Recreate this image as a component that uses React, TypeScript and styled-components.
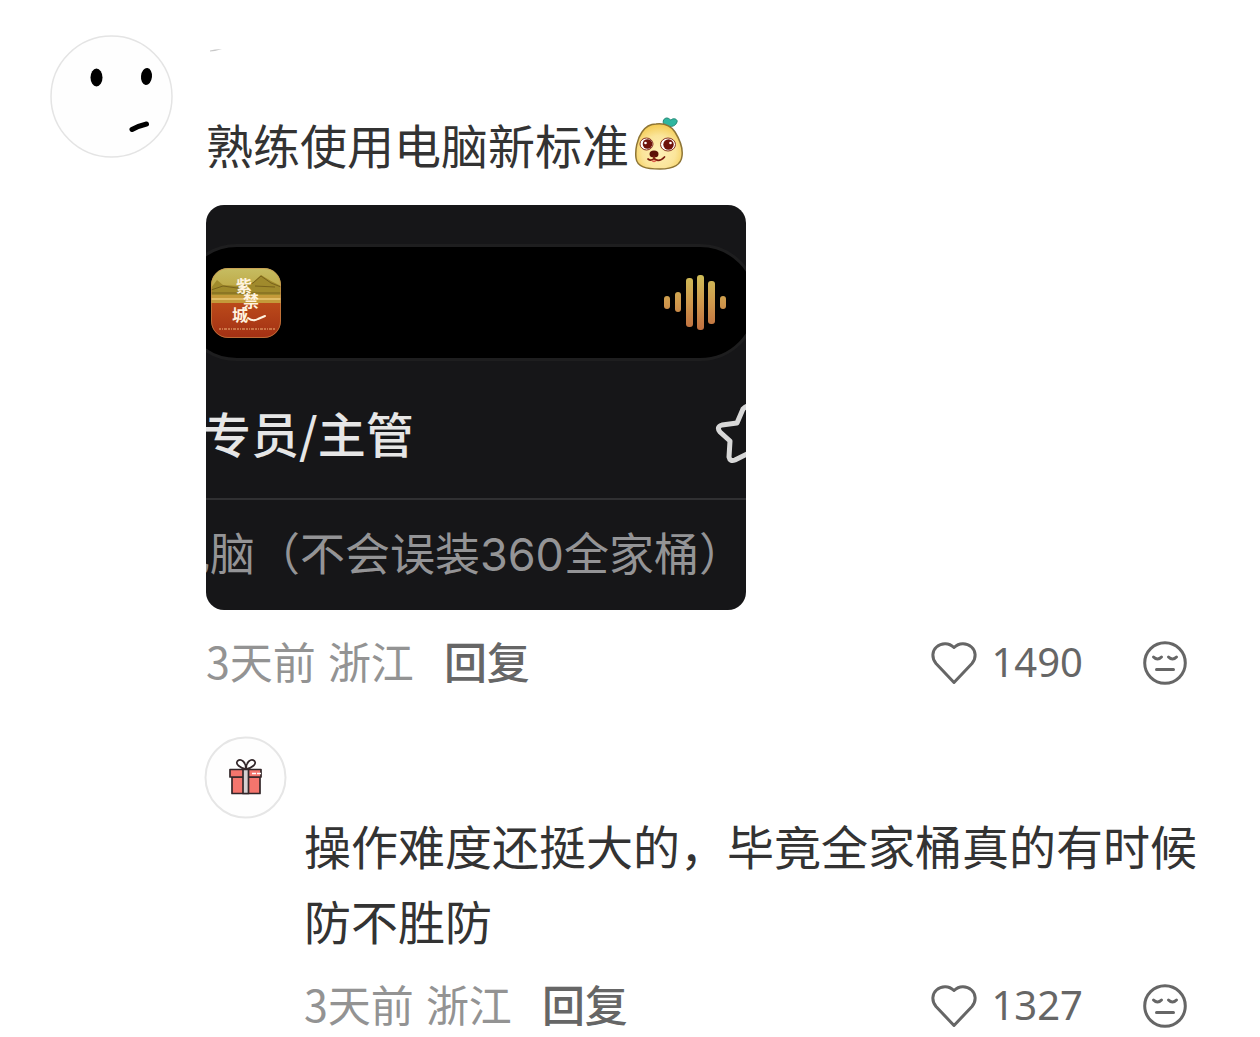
import React from 'react';
import styled, { createGlobalStyle } from 'styled-components';

const GlobalStyle = createGlobalStyle`
  *, *::before, *::after { box-sizing: border-box; }
  body {
    margin: 0;
    background: #fff;
    color: #333;
    font-family: "Noto Sans CJK SC", "Noto Sans", sans-serif;
  }
  p, figure { margin: 0; }
  svg { display: block; flex: none; }
`;

const Page = styled.main`
  padding: 35px 60px 0 50px;
`;

const Comment = styled.article<{ $gap: number }>`
  display: flex;
  align-items: flex-start;
  gap: ${(p) => p.$gap}px;
`;

const Body = styled.div`
  flex: 1;
  min-width: 0;
`;

const NameLine = styled.div`
  height: 71px;
  padding: 13px 4px;
`;

const Message = styled.p`
  font-size: 47px;
  line-height: 75px;
`;

const Sticker = styled.svg`
  display: inline-block;
  vertical-align: -7px;
  margin-left: 5px;
`;

const MetaRow = styled.footer<{ $space: number }>`
  display: flex;
  align-items: center;
  height: 60px;
  margin-top: ${(p) => p.$space}px;
  padding-right: 13px;
  font-size: 43px;
  line-height: 54px;
`;

const When = styled.div`
  display: flex;
  gap: 12px;
  padding-bottom: 6px;
  color: #939393;
`;

const PlainButton = styled.button`
  display: flex;
  align-items: center;
  padding: 0;
  border: 0;
  background: none;
  color: #666;
  font: inherit;
  cursor: pointer;
`;

const ReplyButton = styled(PlainButton)`
  margin-left: 30px;
  margin-right: auto;
  padding-bottom: 6px;
  font-weight: 500;
`;

const LikeButton = styled(PlainButton)`
  gap: 14px;
  margin-right: 60px;
`;

const Count = styled.span`
  padding-bottom: 2px;
  font-family: "Noto Sans", sans-serif;
  font-size: 40px;
`;

const Photo = styled.figure`
  width: 540px;
  max-width: 100%;
  margin-top: 24px;
  padding-top: 39px;
  border-radius: 18px;
  overflow: hidden;
  background: #161618;
`;

const Island = styled.div`
  display: flex;
  align-items: center;
  justify-content: space-between;
  height: 117px;
  margin: 0 -12px 0 -27px;
  padding: 0 28px 0 29px;
  border: 3px solid #1e1e1f;
  border-radius: 58px;
  background: #000;
`;

const JobTitle = styled.div`
  display: flex;
  align-items: center;
  justify-content: space-between;
  height: 139px;
  margin: 0 -37px 0 -3px;
  padding-top: 8px;
  border-bottom: 2px solid #303032;
  color: #e6e6e6;
  font-size: 48px;
  font-weight: 500;
  line-height: 72px;
`;

const JobName = styled.span`
  padding-bottom: 4px;
`;

const JobDetail = styled.div`
  display: flex;
  justify-content: flex-end;
  height: 110px;
  padding: 19px 2px 0 0;
  color: #949496;
  font-family: Inter, "Noto Sans CJK SC", sans-serif;
  font-size: 45px;
  line-height: 72px;
  white-space: nowrap;
`;

const Replies = styled.section`
  margin-top: 43px;
  margin-left: -2px;
`;

const ReplyBody = styled(Body)`
  padding-top: 71px;
`;

const FaceAvatar = () => (
  <svg width="123" height="123" viewBox="0 0 123 123" role="img" aria-label="头像">
    <circle cx="61.500" cy="61.500" r="60.500" fill="#fefefe" stroke="#e4e4e4" strokeWidth="1.500" />
    <ellipse cx="46.500" cy="42.500" rx="6" ry="9" fill="#000" />
    <ellipse cx="96.500" cy="41.500" rx="5.500" ry="8.500" fill="#000" transform="rotate(6 96.500 41.500)" />
    <path d="M82 94.500 Q88 91 96.500 89" fill="none" stroke="#000" strokeWidth="5" strokeLinecap="round" />
  </svg>
);

const GiftAvatar = () => (
  <svg width="83" height="83" viewBox="0 0 83 83" role="img" aria-label="头像">
    <circle cx="41.500" cy="41.500" r="40" fill="#fefefe" stroke="#e6e6e6" strokeWidth="2" />
    <g stroke="#33272a" strokeWidth="1.700" strokeLinejoin="round">
      <path d="M28 41 H56 V57.500 H28 Z" fill="#f4756d" />
      <path d="M26 33.500 H57 V41 H26 Z" fill="#f4756d" />
      <path d="M39 33.500 H44.500 V57.500 H39 Z" fill="#d6d1d1" />
      <path d="M42 33 C36 32 31 28 33.500 25 C37 22 42 26 42 33 C42 26 47 22 50.500 25 C53 28 48 32 42 33 Z" fill="#fff" />
    </g>
    <path d="M48 37.500 H58" stroke="#fff" strokeWidth="1.500" strokeDasharray="4 1" />
  </svg>
);

const DogSticker = () => (
  <Sticker width="50" height="54" viewBox="0 0 50 54" role="img" aria-label="表情">
    <defs>
      <radialGradient id="fur" cx="50%" cy="62%" r="60%">
        <stop offset="0" stopColor="#fff0b8" />
        <stop offset="0.6" stopColor="#fbe59a" />
        <stop offset="1" stopColor="#f4cc55" />
      </radialGradient>
    </defs>
    <path d="M30 8 C28 4 30 1 33 1 C35 1 36 3 37 3 C40 0 45 3 42.500 6 C41 10 35 10 31 9 Z" fill="#2fb6a0" stroke="#248874" strokeWidth="1" />
    <path d="M22 7 C30 6 37 9 41 15 C46 23 49 32 48 39 C47 49 38 52 26 52 C12 52 3 50 2 41 C1 33 3 22 8 15 C12 9 17 7 22 7 Z" fill="url(#fur)" stroke="#8e7536" strokeWidth="1.500" />
    <ellipse cx="12.500" cy="27" rx="6.500" ry="6" fill="#fff" stroke="#8a3522" strokeWidth="1" />
    <ellipse cx="34" cy="27.500" rx="7.500" ry="6.500" fill="#fff" stroke="#8a3522" strokeWidth="1" />
    <circle cx="13.500" cy="27" r="4.800" fill="#6e120b" />
    <circle cx="34.500" cy="27.500" r="5.200" fill="#6e120b" />
    <circle cx="11.500" cy="26" r="1.300" fill="#fff" />
    <circle cx="36.500" cy="26" r="1.300" fill="#fff" />
    <ellipse cx="20" cy="37" rx="4.500" ry="3.500" fill="#5b1008" />
    <path d="M14 42 Q17 44.500 20 41.500 V39 M20 41.500 Q25 46 30.500 40" fill="none" stroke="#7c1c10" strokeWidth="1.700" strokeLinecap="round" />
    <path d="M17 43.500 Q20 47 23 43.500 Z" fill="#dd5a4a" />
  </Sticker>
);

const PalaceIcon = () => (
  <svg width="70" height="70" viewBox="0 0 70 70" role="img" aria-label="紫禁城">
    <defs>
      <clipPath id="tile"><rect width="70" height="70" rx="17" /></clipPath>
      <linearGradient id="sky" x1="0" y1="0" x2="0" y2="1">
        <stop offset="0" stopColor="#c6bd62" />
        <stop offset="1" stopColor="#b99a32" />
      </linearGradient>
      <linearGradient id="wall" x1="0" y1="0" x2="0" y2="1">
        <stop offset="0" stopColor="#bb4a1a" />
        <stop offset="1" stopColor="#a23014" />
      </linearGradient>
    </defs>
    <g clipPath="url(#tile)">
      <rect width="70" height="35" fill="url(#sky)" />
      <path d="M0 20 L6 12 L12 17 L28 18 L40 16 L50 7 L60 13 L70 18 V28 H0 Z" fill="#a08a2c" />
      <path d="M0 22 L12 18 L26 20 L42 15 L50 8 L60 15 L70 19 M0 25 H70 M44 18 L64 19" fill="none" stroke="#78621c" strokeWidth="1" />
      <rect y="27" width="70" height="8" fill="#c49a3a" />
      <rect y="30" width="70" height="2" fill="#e0bc66" />
      <rect y="35" width="70" height="35" fill="url(#wall)" />
      <text fill="#fff3df" fontFamily="Noto Sans CJK SC, sans-serif" fontWeight="700" fontSize="16">
        <tspan x="25" y="24">紫</tspan>
        <tspan x="32" y="39">禁</tspan>
        <tspan x="21" y="53">城</tspan>
      </text>
      <path d="M37 50 Q42 54 47 51 L54 48" fill="none" stroke="#fff3df" strokeWidth="2" strokeLinecap="round" />
      <path d="M8 61 H65" stroke="#d98a58" strokeWidth="1.500" strokeDasharray="2 1 1 1 3 1" />
    </g>
    <rect x="0.500" y="0.500" width="69" height="69" rx="16.500" fill="none" stroke="#c98f4c" strokeOpacity="0.6" />
  </svg>
);

const BARS = [
  { x: 0, top: 21, height: 13 },
  { x: 11, top: 17, height: 20 },
  { x: 22, top: 3, height: 49 },
  { x: 33, top: 0, height: 55 },
  { x: 44, top: 6, height: 43 },
  { x: 56, top: 21, height: 13 },
];

const Waveform = () => (
  <svg width="63" height="55" viewBox="0 0 63 55" aria-hidden="true">
    <defs>
      <linearGradient id="glow" gradientUnits="userSpaceOnUse" x1="0" y1="0" x2="0" y2="55">
        <stop offset="0" stopColor="#cfbd58" />
        <stop offset="0.5" stopColor="#cf984c" />
        <stop offset="1" stopColor="#c06f40" />
      </linearGradient>
    </defs>
    {BARS.map((bar) => (
      <rect key={bar.x} x={bar.x} y={bar.top} width={bar.height < 25 ? 6 : 7} height={bar.height} rx="3" fill="url(#glow)" />
    ))}
  </svg>
);

const Star = () => (
  <svg width="68" height="60" viewBox="0 0 68 60" aria-hidden="true">
    <path
      d="M28 5 Q34 -1 40 5 L46 19 L61 21 Q67 23 63 28 L53 37 L55 52 Q54 58 48 56 L34 49 L20 56 Q15 58 14 53 L15 37 L5 28 Q1 23 7 21 L22 19 Z"
      fill="none" stroke="#d8d8d8" strokeWidth="5" strokeLinejoin="round"
    />
  </svg>
);

const Heart = () => (
  <svg width="46" height="44" viewBox="0 0 46 44" fill="none" stroke="#666" strokeWidth="3" strokeLinejoin="round" aria-hidden="true">
    <path d="M23 41.500 L5 22.500 C0.500 17 1 10 5.500 6 C10.500 1.500 18 1.500 23 6.500 C28 1.500 35.500 1.500 40.500 6 C45 10 45.500 17 41 22.500 Z" />
  </svg>
);

const BoredFace = () => (
  <svg width="44" height="44" viewBox="0 0 44 44" fill="none" stroke="#666" strokeWidth="3" strokeLinecap="round" aria-hidden="true">
    <circle cx="22" cy="22" r="20.300" />
    <path d="M10.500 16 Q14.500 20 18.500 16 M25.500 16 Q29.500 20 33.500 16" />
    <path d="M13.500 28.500 H30.500" />
  </svg>
);

const Smudge = () => (
  <svg width="14" height="4" viewBox="0 0 14 4" aria-hidden="true">
    <path d="M0 2.500 L5 1.500 L12 1 L5 3 L0 3.500 Z" fill="#c8c8c8" />
  </svg>
);

function Meta({ likes, space }: { likes: number; space: number }) {
  return (
    <MetaRow $space={space}>
      <When>
        <span>3天前</span>
        <span>浙江</span>
      </When>
      <ReplyButton type="button">回复</ReplyButton>
      <LikeButton type="button" aria-label={`赞 ${likes}`}>
        <Heart />
        <Count>{likes}</Count>
      </LikeButton>
      <PlainButton type="button" aria-label="不喜欢">
        <BoredFace />
      </PlainButton>
    </MetaRow>
  );
}

export default function App() {
  return (
    <>
      <GlobalStyle />
      <Page>
        <Comment $gap={33}>
          <FaceAvatar />
          <Body>
            <NameLine><Smudge /></NameLine>
            <Message>熟练使用电脑新标准<DogSticker /></Message>
            <Photo>
              <Island>
                <PalaceIcon />
                <Waveform />
              </Island>
              <JobTitle>
                <JobName>专员/主管</JobName>
                <Star />
              </JobTitle>
              <JobDetail>电脑（不会误装360全家桶）</JobDetail>
            </Photo>
            <Meta likes={1490} space={23} />
            <Replies>
              <Comment $gap={17}>
                <GiftAvatar />
                <ReplyBody>
                  <Message>操作难度还挺大的，毕竟全家桶真的有时候防不胜防</Message>
                  <Meta likes={1327} space={19} />
                </ReplyBody>
              </Comment>
            </Replies>
          </Body>
        </Comment>
      </Page>
    </>
  );
}
